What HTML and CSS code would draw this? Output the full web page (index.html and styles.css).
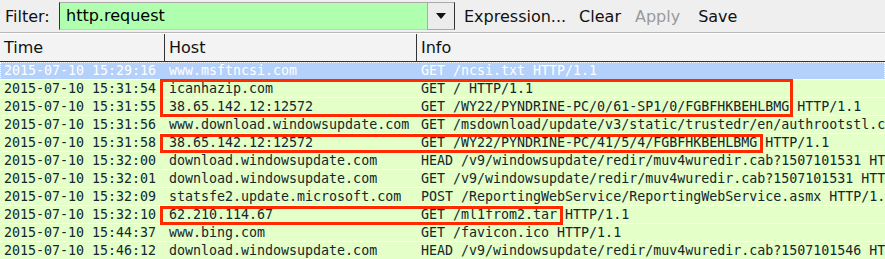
FILE: index.html
```html
<!DOCTYPE html>
<html lang="en">
<head>
  <meta charset="UTF-8" />
  <title>Wireshark - http.request</title>
  <link rel="stylesheet" href="styles.css">
</head>
<body>

  <div class="toolbar">
    <span class="label">Filter:</span>
    <div class="combo">
      <div class="entry">http.request</div>
      <div class="drop">
        <svg width="12" height="8" viewBox="0 0 12 8"><polygon points="1,1 11,1 6,7" fill="#111"/></svg>
      </div>
    </div>
    <span class="btn expr">Expression...</span>
    <span class="btn clear">Clear</span>
    <span class="btn off">Apply</span>
    <span class="btn save">Save</span>
  </div>

  <div class="list">
    <div class="head">
      <div class="c time">Time</div>
      <div class="c host">Host</div>
      <div class="c info">Info</div>
    </div>

    <div class="row sel"><div class="c time">2015-07-10 15:29:16</div><div class="c host">www.msftncsi.com</div><div class="c info">GET /ncsi.txt HTTP/1.1</div></div>
    <div class="row"><div class="c time">2015-07-10 15:31:54</div><div class="c host">icanhazip.com</div><div class="c info">GET / HTTP/1.1</div></div>
    <div class="row"><div class="c time">2015-07-10 15:31:55</div><div class="c host">38.65.142.12:12572</div><div class="c info">GET /WY22/PYNDRINE-PC/0/61-SP1/0/FGBFHKBEHLBMG HTTP/1.1</div></div>
    <div class="row"><div class="c time">2015-07-10 15:31:56</div><div class="c host">www.download.windowsupdate.com</div><div class="c info">GET /msdownload/update/v3/static/trustedr/en/authrootstl.cab</div></div>
    <div class="row"><div class="c time">2015-07-10 15:31:58</div><div class="c host">38.65.142.12:12572</div><div class="c info">GET /WY22/PYNDRINE-PC/41/5/4/FGBFHKBEHLBMG HTTP/1.1</div></div>
    <div class="row"><div class="c time">2015-07-10 15:32:00</div><div class="c host">download.windowsupdate.com</div><div class="c info">HEAD /v9/windowsupdate/redir/muv4wuredir.cab?1507101531 HTTP/1.1</div></div>
    <div class="row"><div class="c time">2015-07-10 15:32:01</div><div class="c host">download.windowsupdate.com</div><div class="c info">GET /v9/windowsupdate/redir/muv4wuredir.cab?1507101531 HTTP/1.1</div></div>
    <div class="row"><div class="c time">2015-07-10 15:32:09</div><div class="c host">statsfe2.update.microsoft.com</div><div class="c info">POST /ReportingWebService/ReportingWebService.asmx HTTP/1.1</div></div>
    <div class="row"><div class="c time">2015-07-10 15:32:10</div><div class="c host">62.210.114.67</div><div class="c info">GET /ml1from2.tar HTTP/1.1</div></div>
    <div class="row"><div class="c time">2015-07-10 15:44:37</div><div class="c host">www.bing.com</div><div class="c info">GET /favicon.ico HTTP/1.1</div></div>
    <div class="row"><div class="c time">2015-07-10 15:46:12</div><div class="c host">download.windowsupdate.com</div><div class="c info">HEAD /v9/windowsupdate/redir/muv4wuredir.cab?1507101546 HTTP/1.1</div></div>

    <!-- marked requests -->
    <div class="mark m1"></div>
    <div class="mark m2"></div>
    <div class="mark m3"></div>
  </div>

</body>
</html>
```

FILE: styles.css
```css
body {
  margin: 0;
  width: 885px;
  height: 259px;
  overflow: hidden;
  background: #f2f2f2;
  font-family: 'DejaVu Sans', sans-serif;
  color: #111;
}

.toolbar {
  display: flex;
  align-items: center;
  height: 32px;
  padding-left: 5px;
  background: #efefef;
  font-size: 16px;
}

.label {
  width: 54px;
}

.combo {
  display: flex;
  height: 28px;
}

.entry {
  width: 361px;
  padding-left: 6px;
  background: #afffaf;
  border-left: 1px solid #333;
  border-top: 1px solid #aaa;
  border-bottom: 1px solid #ccc;
  line-height: 26px;
  color: #000;
}

.drop {
  width: 26px;
  display: flex;
  align-items: center;
  justify-content: center;
  background: #ececec;
  border: 1px solid #aaa;
  border-right: 1px solid #333;
}

.btn {
  margin-left: 14px;
}

.expr {
  margin-left: 9px;
}

.clear {
  margin-left: 13px;
}

.save {
  margin-left: 18px;
}

.off {
  color: #9a9a9a;
}

.list {
  position: relative;
  border-top: 1px solid #b8b8b8;
}

.head {
  display: flex;
  height: 27px;
  border-top: 1px solid #fff;
  border-bottom: 1px solid #333;
  background: #f3f3f3;
  font-size: 16px;
  line-height: 27px;
}

.head .c {
  border-right: 1px solid #333;
}

.head .info {
  border-right: none;
}

.c {
  box-sizing: border-box;
  padding-left: 4px;
  white-space: nowrap;
  overflow: hidden;
}

.time {
  width: 165px;
}

.host {
  width: 252px;
}

.info {
  flex: 1;
}

.row {
  display: flex;
  height: 18px;
  box-sizing: border-box;
  border-bottom: 1px solid #fafff4;
  background: #e4ffc7;
  color: #12272e;
  font-family: 'DejaVu Sans Mono', monospace;
  font-size: 13.3px;
  line-height: 17px;
}

.row.sel {
  background: #b3d1fb;
  color: #fff;
  outline: 1px dotted #fff;
  outline-offset: -1px;
}

.mark {
  position: absolute;
  left: 160px;
  border: 3px solid #ff2a00;
  box-sizing: border-box;
}

.m1 {
  top: 46px;
  width: 633px;
  height: 38px;
}

.m2 {
  top: 101px;
  width: 603px;
  height: 19px;
}

.m3 {
  top: 173px;
  width: 403px;
  height: 19px;
}
```
